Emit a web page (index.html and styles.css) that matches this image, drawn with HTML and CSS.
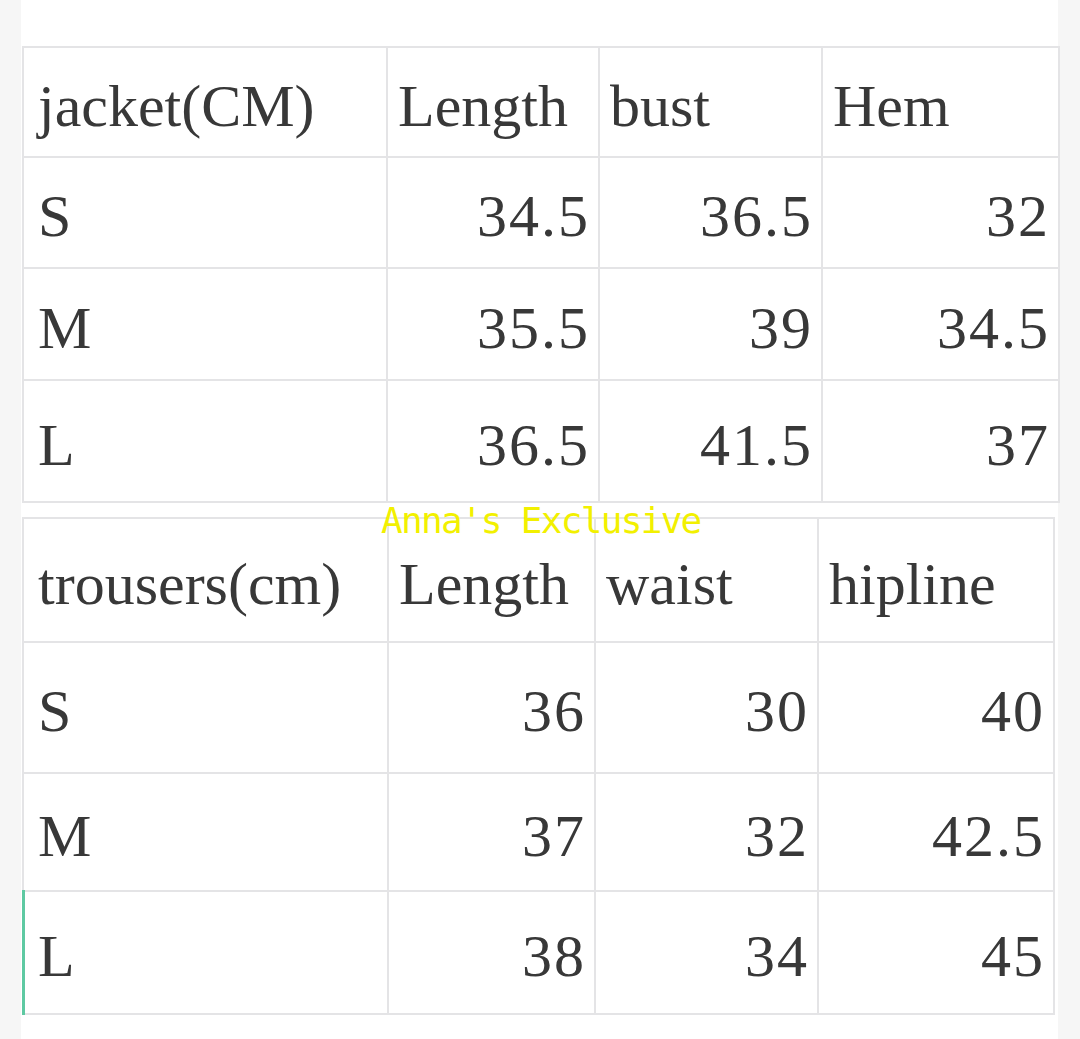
FILE: index.html
```html
<!DOCTYPE html>
<html>
<head>
<meta charset="utf-8">
<link rel="stylesheet" href="styles.css">
</head>
<body>
<div class="sheet">
  <table class="chart chart-jacket">
    <colgroup>
      <col class="c1"><col class="c2"><col class="c3"><col class="c4">
    </colgroup>
    <tr class="r-head"><td>jacket(CM)</td><td>Length</td><td>bust</td><td>Hem</td></tr>
    <tr class="r-a"><td>S</td><td class="num">34.5</td><td class="num">36.5</td><td class="num">32</td></tr>
    <tr class="r-b"><td>M</td><td class="num">35.5</td><td class="num">39</td><td class="num">34.5</td></tr>
    <tr class="r-c"><td>L</td><td class="num">36.5</td><td class="num">41.5</td><td class="num">37</td></tr>
  </table>
  <table class="chart chart-trousers">
    <colgroup>
      <col class="c1"><col class="c2"><col class="c3"><col class="c4">
    </colgroup>
    <tr class="r-head"><td>trousers(cm)</td><td>Length</td><td>waist</td><td>hipline</td></tr>
    <tr class="r-a"><td>S</td><td class="num">36</td><td class="num">30</td><td class="num">40</td></tr>
    <tr class="r-b"><td>M</td><td class="num">37</td><td class="num">32</td><td class="num">42.5</td></tr>
    <tr class="r-c"><td class="selected">L</td><td class="num">38</td><td class="num">34</td><td class="num">45</td></tr>
  </table>
  <div class="watermark">Anna's Exclusive</div>
</div>
</body>
</html>
```

FILE: styles.css
```css
html, body {
  margin: 0;
  padding: 0;
}
body {
  background: #f6f6f6;
  width: 1080px;
  height: 1039px;
  overflow: hidden;
}
.sheet {
  position: relative;
  margin-left: 21px;
  width: 1037px;
  height: 1039px;
  background: #ffffff;
  padding-top: 46px;
  box-sizing: border-box;
}
.chart {
  border-collapse: collapse;
  table-layout: fixed;
  font-family: "Liberation Serif", "Times New Roman", serif;
  font-size: 60px;
  color: #383838;
}
.chart td {
  border: 2px solid #e4e4e6;
  padding: 7px 10px 0 10px;
  vertical-align: middle;
  white-space: nowrap;
  overflow: visible;
  line-height: 1;
}
.chart td:first-child {
  padding-left: 14px;
}
.chart td.num {
  text-align: right;
  letter-spacing: 2px;
  padding-right: 8px;
}
.chart-jacket {
  margin-left: 1px;
  width: 1036px;
}
.chart-jacket .c1 { width: 364px; }
.chart-jacket .c2 { width: 212px; }
.chart-jacket .c3 { width: 223px; }
.chart-jacket .c4 { width: 237px; }
.chart-jacket .r-head { height: 110px; }
.chart-jacket .r-a { height: 111px; }
.chart-jacket .r-b { height: 112px; }
.chart-jacket .r-c { height: 122px; }

.chart-trousers {
  margin-top: 14px;
  margin-left: 1px;
  width: 1031px;
}
.chart-trousers .c1 { width: 365px; }
.chart-trousers .c2 { width: 207px; }
.chart-trousers .c3 { width: 223px; }
.chart-trousers .c4 { width: 236px; }
.chart-trousers .r-head { height: 124px; }
.chart-trousers .r-a { height: 131px; }
.chart-trousers .r-b { height: 118px; }
.chart-trousers .r-c { height: 123px; }

.chart td.selected {
  position: relative;
}
.chart td.selected::before {
  content: "";
  position: absolute;
  left: -2px;
  top: -2px;
  bottom: -2px;
  width: 3px;
  background: #5ec9a2;
}
.watermark {
  position: absolute;
  left: 360px;
  top: 503px;
  font-family: "DejaVu Sans Mono", monospace;
  font-size: 36px;
  line-height: 36px;
  letter-spacing: -1.7px;
  color: #f2f000;
  white-space: nowrap;
}
```
